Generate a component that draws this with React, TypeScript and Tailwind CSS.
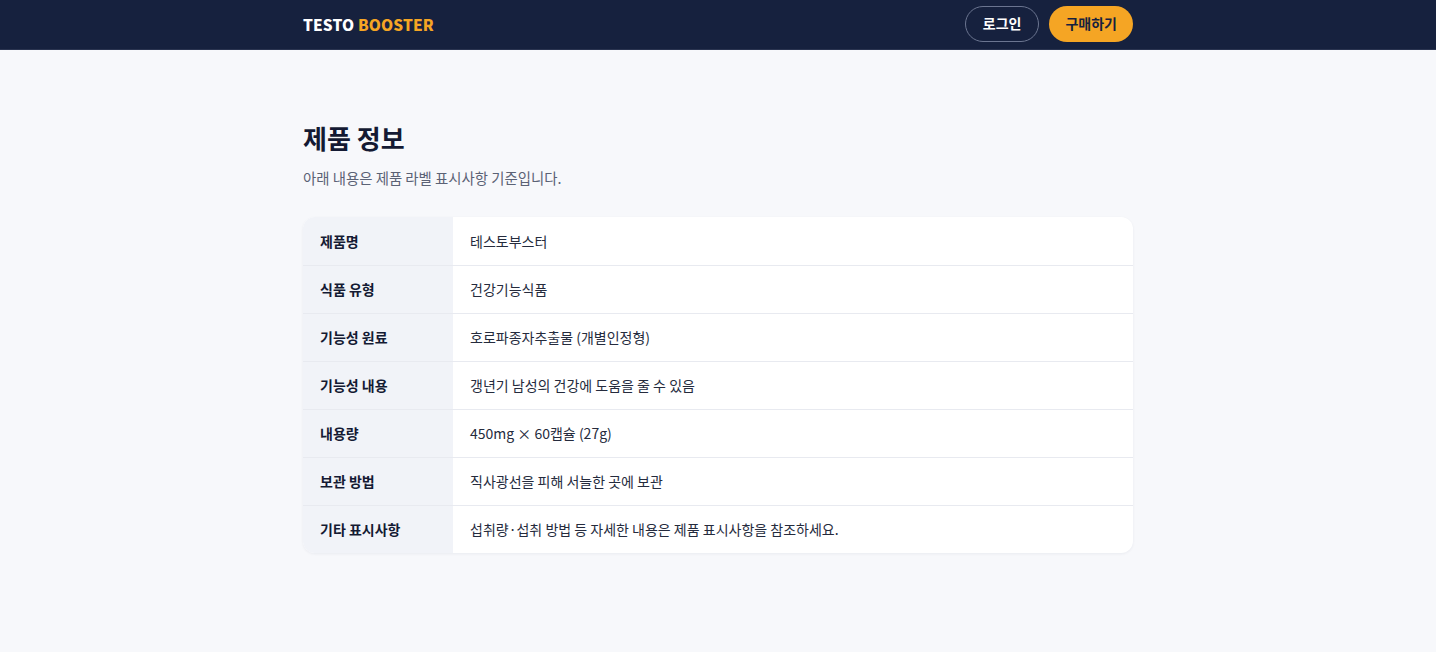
const rows: [string, string][] = [
  ["제품명", "테스토부스터"],
  ["식품 유형", "건강기능식품"],
  ["기능성 원료", "호로파종자추출물 (개별인정형)"],
  ["기능성 내용", "갱년기 남성의 건강에 도움을 줄 수 있음"],
  ["내용량", "450mg × 60캡슐 (27g)"],
  ["보관 방법", "직사광선을 피해 서늘한 곳에 보관"],
  ["기타 표시사항", "섭취량·섭취 방법 등 자세한 내용은 제품 표시사항을 참조하세요."],
];

export default function App() {
  return (
    <div
      className="min-h-[652px] bg-[#f7f8fb] text-[#1a1f36]"
      style={{ fontFamily: '"Noto Sans CJK KR", "Noto Sans", sans-serif' }}
    >
      <header className="h-[50px] bg-[#16213e] border-b border-[#2a3450]">
        <div className="mx-auto flex h-full w-[830px] items-center justify-between">
          <div className="text-[15.4px] font-extrabold tracking-[0.01em]">
            <span className="text-white">TESTO</span>{" "}
            <span className="text-[#f5a524]">BOOSTER</span>
          </div>
          <div className="flex items-center gap-[10px] pb-[2px]">
            <button className="h-[36px] rounded-full border border-[#6b7590] px-[17px] text-[14px] font-semibold text-white">
              로그인
            </button>
            <button className="h-[36px] rounded-full bg-[#f5a524] px-[16px] text-[14px] font-bold text-[#16213e]">
              구매하기
            </button>
          </div>
        </div>
      </header>

      <main className="mx-auto w-[830px] pt-[69px]">
        <h1 className="text-[26px] font-bold leading-[38px] text-[#141a33]">제품 정보</h1>
        <p className="mt-[10px] text-[14.4px] leading-[22px] text-[#5b6275]">
          아래 내용은 제품 라벨 표시사항 기준입니다.
        </p>

        <div className="mt-[28px] overflow-hidden rounded-[12px] bg-white shadow-[0_1px_3px_rgba(20,30,60,0.06)]">
          {rows.map(([label, value], i) => (
            <div
              key={label}
              className={`flex h-[48px] items-center ${i > 0 ? "border-t border-[#e8eaf0]" : ""}`}
            >
              <div className="flex h-full w-[150px] shrink-0 items-center bg-[#f1f3f8] pl-[17px] text-[14px] font-bold text-[#141a33]">
                {label}
              </div>
              <div className="pl-[17px] text-[14px] text-[#252b3d]">{value}</div>
            </div>
          ))}
        </div>
      </main>
    </div>
  );
}
